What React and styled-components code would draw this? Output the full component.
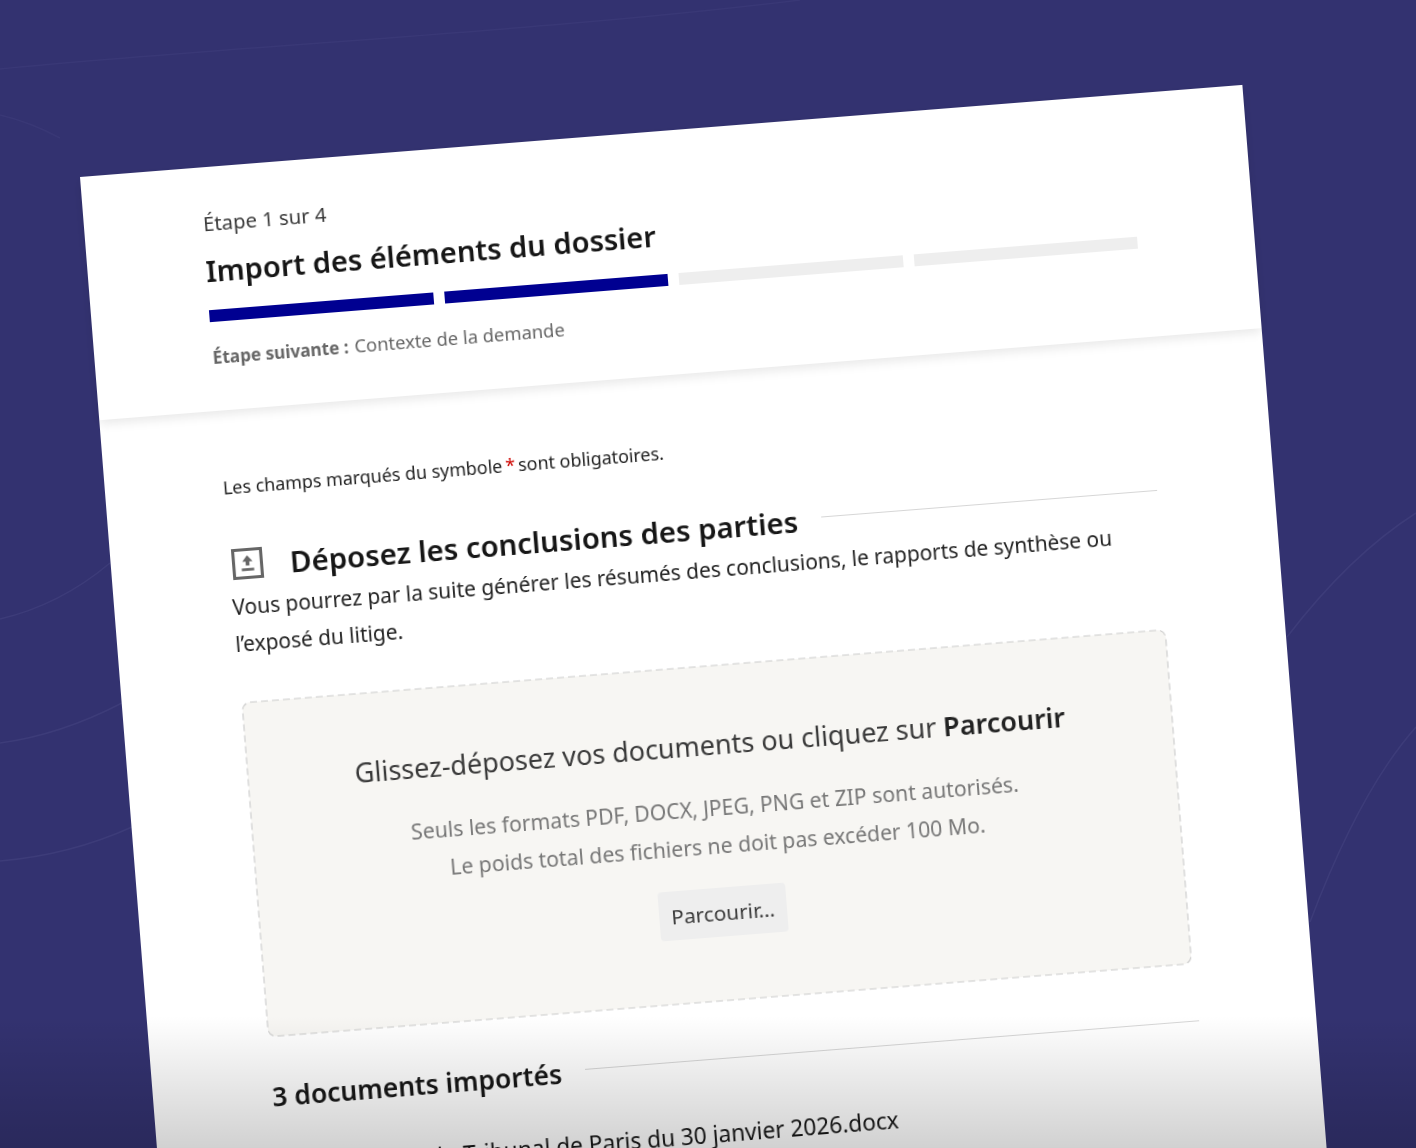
import React from "react";
import styled, { createGlobalStyle } from "styled-components";

const Global = createGlobalStyle`
  html, body { margin: 0; padding: 0; background: #333270; }
  body { font-family: "Noto Sans", "Liberation Sans", sans-serif; color: #161616; }
`;

const Scene = styled.div`
  position: relative;
  width: 1416px;
  height: 1148px;
  overflow: hidden;
  background: #333270;
`;

const Curves = styled.svg`
  position: absolute;
  inset: 0;
  width: 1416px;
  height: 1148px;
`;

const Sheet = styled.article`
  position: absolute;
  left: 80px;
  top: 177px;
  width: 1166px;
  height: 1160px;
  background: #fff;
  transform: rotate(-4.53deg);
  transform-origin: 0 0;
  filter: blur(0.3px);
`;

const Header = styled.header`
  height: 244px;
  box-sizing: border-box;
  padding: 41px 117px 0 118px;
  box-shadow: 0 4px 10px rgba(0, 0, 0, 0.09);
`;

const StepLabel = styled.p`
  margin: 0 0 0 1px;
  font-size: 20.3px;
  line-height: 30px;
  color: #3a3a3a;
`;

const StepTitle = styled.h1`
  margin: 13px 0 0;
  font-size: 29.15px;
  line-height: 40px;
  font-weight: 600;
  color: #161616;
`;

const Progress = styled.div`
  display: grid;
  grid-template-columns: repeat(4, 1fr);
  gap: 11px;
  margin-top: 19px;
`;

const Segment = styled.span`
  height: 12px;
  background: ${(p) => (p.$done ? "#000091" : "#eeeeee")};
`;

const NextStep = styled.p`
  margin: 21px 0 0;
  font-size: 18.4px;
  line-height: 28px;
  color: #666;
  & > b { font-size: 17.2px; font-weight: 700; margin-right: 6px; }
`;

const Main = styled.main`
  padding: 63px 117px 0 118px;
`;

const Legend = styled.p`
  margin: 0;
  font-size: 17.9px;
  line-height: 28px;
  color: #222;
  & > i { font-style: normal; color: #ce0500; margin: 0 3px; }
`;

const SectionHead = styled.div`
  display: flex;
  align-items: center;
  margin-top: ${(p) => p.$gap}px;
  padding-left: ${(p) => p.$indent || 0}px;
`;

const SectionIcon = styled.svg`
  flex: none;
  width: 31px;
  height: 31px;
  margin: -3px 27px 0 3px;
`;

const SectionTitle = styled.h2`
  margin: 0;
  flex: none;
  font-size: ${(p) => p.$size}px;
  line-height: 40px;
  font-weight: 600;
  color: #161616;
`;

const Rule = styled.span`
  flex: 1;
  height: 1px;
  margin-left: 24px;
  margin-top: -6px;
  background: #d6d6d6;
`;

const Description = styled.p`
  margin: 3px 0 0;
  font-size: 20.9px;
  line-height: 37px;
  color: #222;
`;

const DropZone = styled.section`
  position: relative;
  box-sizing: border-box;
  height: 335px;
  margin: 40px 3px 0 2px;
  padding-top: 59px;
  display: flex;
  flex-direction: column;
  align-items: center;
  background: #f7f6f3;
  border-radius: 8px;
  text-align: center;
`;

const DashFrame = styled.svg`
  position: absolute;
  inset: 0;
  width: 100%;
  height: 100%;
  overflow: visible;
  fill: none;
  stroke: #cbcbcb;
  stroke-width: 1.1;
  stroke-dasharray: 7 4;
`;

const DropTitle = styled.p`
  position: relative;
  margin: 0;
  font-size: 27px;
  line-height: 40px;
  color: #3a3a3a;
  & > b { font-weight: 600; color: #222; }
`;

const DropHint = styled.p`
  position: relative;
  margin: 24px 0 0;
  font-size: 21.2px;
  line-height: 38px;
  color: #777;
`;

const Browse = styled.button`
  position: relative;
  width: 128px;
  height: 49px;
  margin-top: 23px;
  border: 0;
  border-radius: 4px;
  background: #eeeeee;
  font: inherit;
  font-size: 20.8px;
  color: #3a3a3a;
`;

const FileName = styled.p`
  margin: 36px 0 0;
  padding-left: 19px;
  font-size: 22.7px;
  line-height: 34px;
  color: #161616;
`;

const BottomFade = styled.div`
  position: absolute;
  left: 0;
  right: 0;
  bottom: 0;
  height: 132px;
  background: linear-gradient(to bottom, rgba(0, 0, 0, 0), rgba(0, 0, 0, 0.18));
  pointer-events: none;
`;

export default function App() {
  return (
    <>
      <Global />
      <Scene>
        <Curves viewBox="0 0 1416 1148" fill="none" stroke="#3d3c79" strokeWidth="1.5">
          <path d="M0 69C250 45 560 30 800 0" opacity="0.6" />
          <path d="M0 115Q30 122 60 138" opacity="0.6" />
          <path d="M0 619Q60 605 110 563" />
          <path d="M0 743Q60 735 122 703" />
          <path d="M0 861Q70 855 132 827" />
          <path d="M1416 513Q1350 555 1287 637" />
          <path d="M1416 727Q1360 790 1310 922" />
        </Curves>
        <Sheet>
          <Header>
            <StepLabel>Étape 1 sur 4</StepLabel>
            <StepTitle>Import des éléments du dossier</StepTitle>
            <Progress>
              <Segment $done />
              <Segment $done />
              <Segment />
              <Segment />
            </Progress>
            <NextStep>
              <b>Étape suivante :</b>Contexte de la demande
            </NextStep>
          </Header>
          <Main>
            <Legend>
              Les champs marqués du symbole<i>*</i>sont obligatoires.
            </Legend>
            <SectionHead $gap={45}>
              <SectionIcon viewBox="0 0 30 30">
                <rect x="1.5" y="1.5" width="27" height="27" fill="none" stroke="#666" strokeWidth="3" />
                <path d="M15 7l5 6h-3.2v4h-3.6v-4H10z" fill="#666" />
                <rect x="9" y="19.5" width="12" height="2.6" fill="#666" />
              </SectionIcon>
              <SectionTitle $size={29.4}>Déposez les conclusions des parties</SectionTitle>
              <Rule />
            </SectionHead>
            <Description>
              Vous pourrez par la suite générer les résumés des conclusions, le rapports de synthèse ou l’exposé du litige.
            </Description>
            <DropZone>
              <DashFrame aria-hidden="true">
                <rect x="0" y="0" width="100%" height="100%" rx="8" />
              </DashFrame>
              <DropTitle>
                Glissez-déposez vos documents ou cliquez sur <b>Parcourir</b>
              </DropTitle>
              <DropHint>
                Seuls les formats PDF, DOCX, JPEG, PNG et ZIP sont autorisés.
                <br />
                Le poids total des fichiers ne doit pas excéder 100 Mo.
              </DropHint>
              <Browse type="button">Parcourir...</Browse>
            </DropZone>
            <SectionHead $gap={40} $indent={1}>
              <SectionTitle $size={26.5}>3 documents importés</SectionTitle>
              <Rule />
            </SectionHead>
            <FileName>Conclusions du Tribunal de Paris du 30 janvier 2026.docx</FileName>
          </Main>
        </Sheet>
        <BottomFade />
      </Scene>
    </>
  );
}
